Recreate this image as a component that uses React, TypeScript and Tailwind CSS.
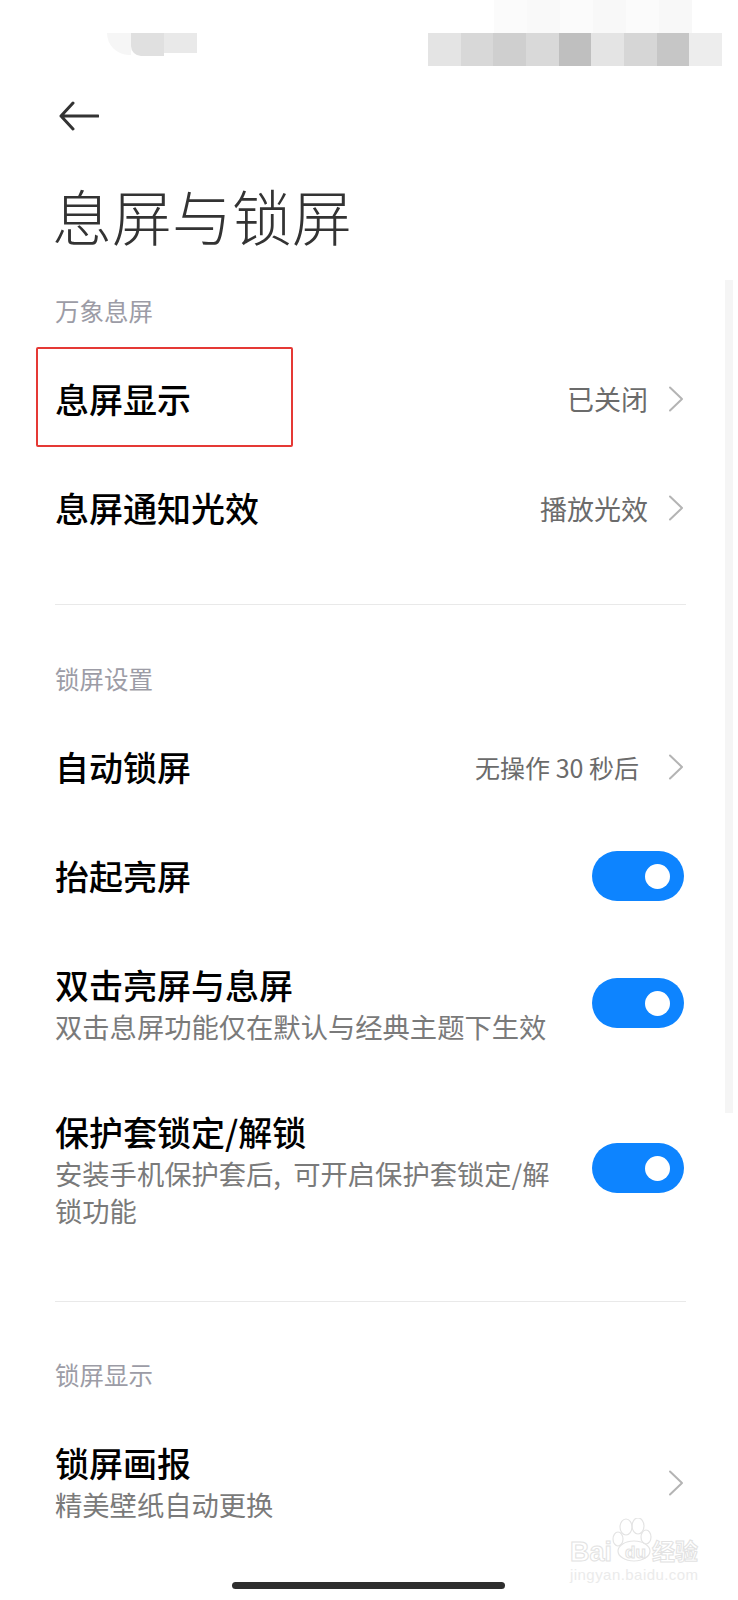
import React from 'react';

const font = "font-['Noto_Sans_CJK_SC','Noto_Sans',sans-serif]";

const mosaicTop = ['#fbfbfb', '#f9f9f9', '#fbfbfb', '#f8f8f8', '#fbfbfb', '#f8f8f8'];
const mosaicBottom = ['#e4e4e4', '#d8d8d8', '#cfcfcf', '#d9d9d9', '#bfbfbf', '#e4e4e4', '#d6d6d6', '#c6c6c6', '#ededed'];

function Chevron() {
  return (
    <svg width="16" height="26" viewBox="0 0 16 26" fill="none" className="ml-[20px] shrink-0">
      <path d="M2 1.5 L14 13 L2 24.5" stroke="#b4b4b4" strokeWidth="2" strokeLinecap="round" strokeLinejoin="round" />
    </svg>
  );
}

function Toggle() {
  return (
    <div className="w-[92px] h-[50px] rounded-full bg-[#0d84ff] flex items-center justify-end pr-[14px] shrink-0">
      <div className="w-[25px] h-[25px] rounded-full bg-white" />
    </div>
  );
}

function SectionLabel({ children, className }: { children: string; className: string }) {
  return (
    <div className={`flex items-center h-[36px] text-[24.5px] leading-none text-[#9c9ca6] ${className}`}>{children}</div>
  );
}

function LinkRow({ title, value, className, valueClass }: { title: string; value: string; className: string; valueClass?: string }) {
  return (
    <div className={`flex items-center ${className}`}>
      <span className="text-[34px] font-medium leading-none text-black">{title}</span>
      <span className={`ml-auto leading-none text-[#6b6b6b] ${valueClass || 'text-[27px]'}`}>{value}</span>
      <Chevron />
    </div>
  );
}

function ToggleRow({ title, sub, className, textClass }: { title: string; sub?: string[]; className: string; textClass?: string }) {
  return (
    <div className={`flex items-center justify-between ${className}`}>
      <div className={textClass}>
        <div className="text-[34px] font-medium leading-[40px] text-black">{title}</div>
        {sub && (
          <div className="text-[27.3px] leading-[37px] text-[#7a7a7a] mt-[3px]">
            {sub.map((s) => (
              <div key={s}>{s}</div>
            ))}
          </div>
        )}
      </div>
      <Toggle />
    </div>
  );
}

function Divider({ className }: { className: string }) {
  return <div className={`h-px bg-[#e9e9e9] -mr-[2px] ${className}`} />;
}

function Watermark() {
  return (
    <div className="absolute left-[568px] top-[1518px] w-[132px] h-[66px] text-white">
      <svg width="132" height="46" viewBox="0 0 132 46" fill="none" stroke="#e4e4e4" strokeWidth="1.2" className="absolute left-0 top-0">
        <ellipse cx="50" cy="21" rx="5" ry="7" />
        <ellipse cx="58" cy="9" rx="6" ry="8" />
        <ellipse cx="70" cy="8" rx="6" ry="8" />
        <ellipse cx="78" cy="19" rx="5" ry="7" />
        <ellipse cx="66" cy="33" rx="16" ry="10" />
      </svg>
      <div className="absolute left-[2px] top-[21px] font-['Liberation_Sans',sans-serif] text-[27px] leading-none font-bold [-webkit-text-stroke:1px_#e2e2e2]">
        Bai
      </div>
      <div className="absolute left-[57px] top-[26px] font-['Liberation_Sans',sans-serif] text-[17px] leading-none font-bold [-webkit-text-stroke:1px_#e2e2e2]">
        du
      </div>
      <div className="absolute left-[84px] top-[21px] text-[23px] leading-none font-bold [-webkit-text-stroke:1px_#e2e2e2]">
        经验
      </div>
      <div className="absolute left-[2px] top-[49px] font-['Liberation_Sans',sans-serif] text-[15px] leading-none tracking-[0.45px] text-[#ebebeb]">
        jingyan.baidu.com
      </div>
    </div>
  );
}

export default function App() {
  return (
    <div className={`relative w-[738px] h-[1600px] overflow-hidden bg-white ${font}`}>
      {/* status bar, pixelated in the picture */}
      <div className="h-[99px]">
        <div className="flex justify-end h-[33px] pr-[46px]">
          {mosaicTop.map((c, i) => (
            <div key={i} className="w-[33px]" style={{ backgroundColor: c }} />
          ))}
        </div>
        <div className="flex h-[33px]">
          <div className="flex ml-[107px] h-[23px]">
            <div className="w-[24px] h-[22px] bg-[#f6f6f6] rounded-bl-[24px]" />
            <div className="w-[33px] h-[23px] bg-[#e0e0e0] rounded-bl-[10px]" />
            <div className="w-[33px] h-[20px] bg-[#e9e9e9]" />
          </div>
          <div className="flex ml-auto mr-[16px]">
            {mosaicBottom.map((c, i) => (
              <div key={i} className="w-[32.7px]" style={{ backgroundColor: c }} />
            ))}
          </div>
        </div>
      </div>

      <div className="pl-[55px] pr-[54px]">
        <div className="h-[34px] flex items-center pl-[4px]">
          <svg width="40" height="30" viewBox="0 0 40 30" fill="none">
            <path d="M14 2 L2 15 L14 28 M2 15 H39" stroke="#333333" strokeWidth="3" strokeLinecap="round" strokeLinejoin="round" />
          </svg>
        </div>
        <div className="mt-[47px] -ml-[3px] h-[70px] flex items-center text-[60px] font-light leading-none text-[#333333]">息屏与锁屏</div>

        <SectionLabel className="mt-[43px]">万象息屏</SectionLabel>
        <div className="mt-[14px]">
          <LinkRow title="息屏显示" value="已关闭" className="h-[111px]" />
          <LinkRow title="息屏通知光效" value="播放光效" className="h-[108px]" />
        </div>
        <Divider className="mt-[42px]" />

        <SectionLabel className="mt-[56px]">锁屏设置</SectionLabel>
        <div className="mt-[16px]">
          <LinkRow title="自动锁屏" value="无操作 30 秒后" className="h-[108px]" valueClass="text-[25px] mr-[9px]" />
          <ToggleRow title="抬起亮屏" className="mt-[1px] h-[108px]" />
          <ToggleRow title="双击亮屏与息屏" sub={['双击息屏功能仅在默认与经典主题下生效']} className="mt-[18px] h-[110px]" textClass="pt-[4px]" />
          <ToggleRow title="保护套锁定/解锁" sub={['安装手机保护套后,\u00a0\u00a0可开启保护套锁定/解', '锁功能']} className="mt-[45px] h-[130px]" textClass="pt-[5px]" />
        </div>
        <Divider className="mt-[68px]" />

        <SectionLabel className="mt-[55px]">锁屏显示</SectionLabel>
        <div className="mt-[50px] flex items-center justify-between">
          <div>
            <div className="text-[34px] font-medium leading-[40px] text-black">锁屏画报</div>
            <div className="text-[27.3px] leading-[37px] text-[#7a7a7a] mt-[3px]">精美壁纸自动更换</div>
          </div>
          <Chevron />
        </div>
      </div>

      {/* scrollbar */}
      <div className="absolute left-[725px] top-[280px] w-[8px] h-[833px] bg-[#f5f5f5]" />
      {/* red annotation box */}
      <div className="absolute left-[36px] top-[347px] w-[257px] h-[100px] border-2 border-[#e53935] rounded-[2px]" />
      {/* home indicator */}
      <div className="absolute left-[232px] top-[1582px] w-[273px] h-[7px] rounded-full bg-[#2e2e2e]" />
      <Watermark />
    </div>
  );
}
